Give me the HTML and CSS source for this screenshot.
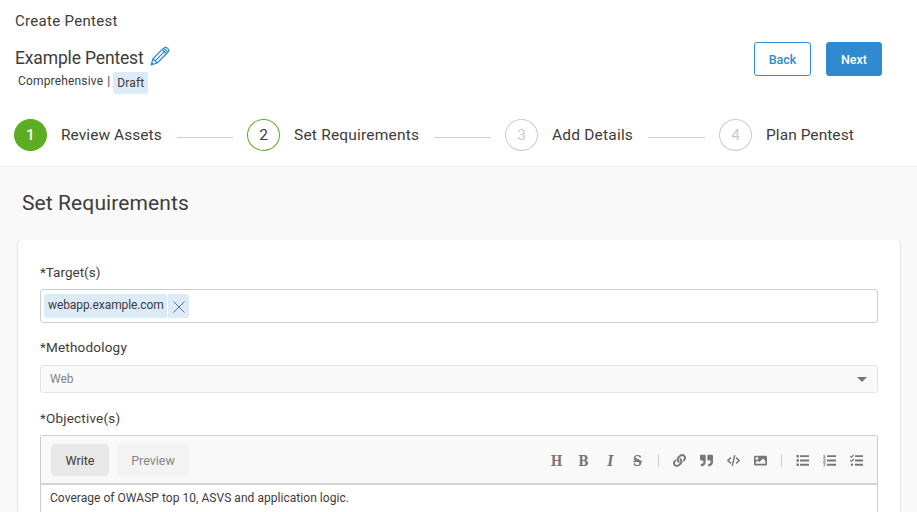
FILE: index.html
```html
<!DOCTYPE html>
<html lang="en">
<head>
<meta charset="utf-8">
<title>Create Pentest</title>
<link rel="stylesheet" href="styles.css">
</head>
<body>
<header class="header">
  <div class="crumb">Create Pentest</div>
  <div class="title-row">
    <div>
      <div class="title"><h1>Example Pentest</h1>
        <svg class="pencil" viewBox="0 0 20 20" fill="none" stroke="#2f8ad0" stroke-width="1.25" stroke-linejoin="round"><path d="M1.2 18.8 3 12.8 13.7 2.1Q15.6.4 17.6 2.4T17.9 6.3L7.2 17zM3 12.8 7.2 17M12.3 3.5l4.2 4.2M13.7 2.1l4.2 4.2M5.1 14.9 14.4 5.6M1.8 16.8l1.4 1.4"/></svg>
      </div>
      <div class="meta"><span>Comprehensive</span><span class="bar">|</span><span class="draft">Draft</span></div>
    </div>
    <div class="actions"><button class="btn back">Back</button><button class="btn next">Next</button></div>
  </div>
  <ol class="steps">
    <li class="step s1"><span class="num done">1</span><span class="name">Review Assets</span><i></i></li>
    <li class="step s2"><span class="num current">2</span><span class="name">Set Requirements</span><i></i></li>
    <li class="step s3"><span class="num">3</span><span class="name">Add Details</span><i></i></li>
    <li class="step s4"><span class="num">4</span><span class="name">Plan Pentest</span></li>
  </ol>
</header>
<main>
  <h2>Set Requirements</h2>
  <section class="card">
    <label class="l-target">*Target(s)</label>
    <div class="targets"><span class="chip">webapp.example.com</span><span class="remove"><svg viewBox="0 0 12 12" stroke="#53626e" stroke-width=".9"><path d="M.5.5l11 11M11.5.5l-11 11"/></svg></span></div>
    <label class="l-method">*Methodology</label>
    <div class="select"><span>Web</span><b></b></div>
    <label class="l-object">*Objective(s)</label>
    <div class="editor">
      <div class="toolbar">
        <span class="tab write">Write</span><span class="tab preview">Preview</span>
        <div class="tools">
          <span class="tool letter">H</span><span class="tool letter">B</span><span class="tool letter it">I</span><span class="tool letter strike">S</span>
          <span class="sep"></span>
          <span class="tool"><svg viewBox="0 0 512 512"><path d="M326.612 185.391c59.747 59.809 58.927 155.698.36 214.59-.11.12-.24.25-.36.37l-67.2 67.2c-59.27 59.27-155.699 59.262-214.96 0-59.27-59.26-59.27-155.7 0-214.96l37.106-37.106c9.84-9.84 26.786-3.3 27.294 10.606.648 17.722 3.826 35.527 9.69 52.721 1.986 5.822.567 12.262-3.783 16.612l-13.087 13.087c-28.026 28.026-28.905 73.66-1.155 101.96 28.024 28.579 74.086 28.749 102.325.51l67.2-67.19c28.191-28.191 28.073-73.757 0-101.83-3.701-3.694-7.429-6.564-10.341-8.569a16.037 16.037 0 0 1-6.947-12.606c-.396-10.567 3.348-21.456 11.698-29.806l21.054-21.055c5.521-5.521 14.182-6.199 20.584-1.731a152.482 152.482 0 0 1 20.522 17.197zM467.547 44.449c-59.261-59.262-155.69-59.27-214.96 0l-67.2 67.2c-.12.12-.25.25-.36.37-58.566 58.892-59.387 154.781.36 214.59a152.454 152.454 0 0 0 20.521 17.196c6.402 4.468 15.064 3.789 20.584-1.731l21.054-21.055c8.35-8.35 12.094-19.239 11.698-29.806a16.037 16.037 0 0 0-6.947-12.606c-2.912-2.005-6.64-4.875-10.341-8.569-28.073-28.073-28.191-73.639 0-101.83l67.2-67.19c28.239-28.239 74.3-28.069 102.325.51 27.75 28.3 26.872 73.934-1.155 101.96l-13.087 13.087c-4.35 4.35-5.769 10.79-3.783 16.612 5.864 17.194 9.042 34.999 9.69 52.721.509 13.906 17.454 20.446 27.294 10.606l37.106-37.106c59.271-59.259 59.271-155.699.001-214.959z"/></svg></span>
          <span class="tool"><svg viewBox="0 0 512 512"><path d="M464 32H336c-26.5 0-48 21.5-48 48v128c0 26.5 21.5 48 48 48h80v64c0 35.3-28.7 64-64 64h-8c-13.3 0-24 10.7-24 24v48c0 13.3 10.7 24 24 24h8c88.4 0 160-71.6 160-160V80c0-26.5-21.5-48-48-48zm-288 0H48C21.5 32 0 53.5 0 80v128c0 26.5 21.5 48 48 48h80v64c0 35.3-28.7 64-64 64h-8c-13.3 0-24 10.7-24 24v48c0 13.3 10.7 24 24 24h8c88.4 0 160-71.6 160-160V80c0-26.5-21.5-48-48-48z"/></svg></span>
          <span class="tool"><svg viewBox="0 0 13 13"><path fill="none" stroke="#777" stroke-width="1.5" d="M3.9 3.6.9 6.5l3 2.9M9.1 3.6l3 2.9-3 2.9M7.7 1.2 5.3 11.8"/></svg></span>
          <span class="tool"><svg viewBox="0 0 512 512"><path d="M464 448H48c-26.51 0-48-21.49-48-48V112c0-26.51 21.49-48 48-48h416c26.51 0 48 21.49 48 48v288c0 26.51-21.49 48-48 48zM112 120c-30.928 0-56 25.072-56 56s25.072 56 56 56 56-25.072 56-56-25.072-56-56-56zM64 384h384V272l-87.515-87.515c-4.686-4.686-12.284-4.686-16.971 0L208 320l-55.515-55.515c-4.686-4.686-12.284-4.686-16.971 0L64 336v48z"/></svg></span>
          <span class="sep"></span>
          <span class="tool"><svg viewBox="0 0 13 13"><path d="M.5 1h2.4v2.4H.5zM.5 5.3h2.4v2.4H.5zM.5 9.6h2.4V12H.5zM4 1.2h9v1.9H4zM4 5.5h9v1.9H4zM4 9.8h9v1.9H4z"/></svg></span>
          <span class="tool"><svg viewBox="0 0 13 13"><path d="M4 1.2h9v1.9H4zM4 5.5h9v1.9H4zM4 9.8h9v1.9H4z"/><path fill="none" stroke="#777" stroke-width=".8" d="M.4 1.2h1v2.4M.2 3.6h2.4M.3 5.2h1.9v1.1L.4 7.8h2.3M.3 9.2h1.9L1.3 10.3q1.1 0 1 .9T.3 12"/></svg></span>
          <span class="tool"><svg viewBox="0 0 13 13"><path d="M5 1.2h8v1.9H5zM5 5.5h8v1.9H5zM5 9.8h8v1.9H5z"/><circle cx="2" cy="10.7" r="1.2"/><path fill="none" stroke="#777" stroke-width="1.2" d="M.3 2.1l1.1 1.1L3.8.8M.3 6.3l1.1 1.1L3.8 5"/></svg></span>
        </div>
      </div>
      <div class="text">Coverage of OWASP top 10, ASVS and application logic.</div>
    </div>
  </section>
</main>
</body>
</html>
```
FILE: styles.css
```css
* { box-sizing: border-box; }
body { margin: 0; background: #f9f9f9; color: #403b3c; font-family: Roboto, "Liberation Sans", sans-serif; }
h1, h2, ol { margin: 0; padding: 0; font-weight: 400; }
.header { height: 167px; background: #fff; border-bottom: 1px solid #f0f0f0; overflow: hidden; }
.crumb { margin: 11px 0 0 15px; height: 20px; line-height: 20px; font-size: 15px; letter-spacing: .3px; }
.title-row { display: flex; justify-content: space-between; height: 71px; margin-top: 11px; padding: 0 35px 0 15px; }
.title { display: flex; height: 30px; padding-top: 4px; }
h1 { width: 135px; white-space: nowrap; font-size: 17.5px; line-height: 24px; letter-spacing: -.15px; }
.pencil { width: 20px; height: 20px; }
.meta { display: flex; padding-left: 3px; font-size: 12px; line-height: 18px; letter-spacing: .17px; }
.bar { margin: 0 3px 0 4px; }
.draft { width: 35px; text-align: center; height: 22px; line-height: 22px; background: #dcebf8; border-radius: 2px; }
.actions { display: flex; gap: 15px; }
.btn { height: 34px; margin: 0; padding: 1px 0 0; font: 500 12.5px Roboto, sans-serif; border: 1px solid #2f8ad0; border-radius: 3px; }
.back { width: 57px; background: #fff; color: #2f8ad0; }
.next { width: 56px; background: #2f8ad0; color: #fff; }
.steps { display: flex; list-style: none; padding: 6px 0 0 14px; }
.step { display: flex; align-items: center; height: 32px; font-size: 15.5px; }
.s1 { width: 233px; }
.s2 { width: 258px; }
.s3 { width: 214px; }
.num { display: flex; align-items: center; justify-content: center; width: 33px; height: 32px; padding-bottom: 1px; flex: none; border: 1px solid #ccc; border-radius: 50%; color: #ccc; }
.done { background: #5cad23; border-color: #5cad23; color: #fff; font-weight: 500; }
.current { border-color: #5cad23; color: #403b3c; }
.name { margin: -1px 0 0 14px; white-space: nowrap; letter-spacing: .05px; }
.s2 .name, .s3 .name { letter-spacing: .2px; }
.step i { height: 1px; margin: 5px 14px 0 15px; background: #ccc; flex: 1; }
main { height: 345px; overflow: hidden; }
h2 { padding: 20px 0 0 22px; height: 73px; font-size: 21px; line-height: 32px; letter-spacing: .1px; }
.card { margin: 0 17px 0 18px; height: 272px; padding: 21px 22px 0; background: #fff; border-radius: 4px 4px 0 0; box-shadow: 0 0 2px #bbb; clip-path: inset(0 -3px 0 -3px); }
label { display: block; height: 22px; line-height: 22px; font-size: 13.5px; letter-spacing: .2px; }
.l-target { letter-spacing: 0; }
.l-method { line-height: 20px; }
.targets { display: flex; height: 34px; margin: 6px 0 14px; padding: 4px 3px; border: 1px solid #ccc; border-radius: 3px; font-size: 12px; }
.chip { width: 123px; white-space: nowrap; height: 24px; line-height: 22px; padding: 0 4px; background: #dcebf8; border-radius: 3px 0 0 3px; letter-spacing: -.1px; }
.remove { width: 21px; height: 24px; margin-left: 1px; padding: 7px 0 0 5px; background: #dcebf8; border-radius: 0 3px 3px 0; }
.remove svg { display: block; width: 12px; height: 12px; }
.select { display: flex; align-items: center; justify-content: space-between; height: 28px; margin: 6px 0 14px; padding: 0 10px 0 9px; border: 1px solid #e3e3e3; border-radius: 3px; background: #f9f9f9; color: #858585; font-size: 12px; }
.select b { border: 5px solid transparent; border-top-color: #777; border-bottom: 0; }
.editor { height: 77px; margin-top: 6px; border: 1px solid #ccc; border-bottom: 0; border-radius: 3px 3px 0 0; }
.toolbar { display: flex; align-items: center; height: 49px; padding: 0 7px 0 10px; background: #f9f9f9; border-bottom: 2px solid #d4d4d4; }
.tab { height: 32px; line-height: 33px; border-radius: 4px; text-align: center; font-size: 12.5px; }
.write { width: 58px; background: #e8e8e8; }
.preview { width: 72px; margin-left: 8px; background: #f3f3f3; color: #858585; }
.tools { display: flex; align-items: center; margin-left: auto; padding-top: 2px; }
.tool { display: flex; align-items: center; justify-content: center; width: 27px; height: 27px; color: #777; fill: #777; }
.tool svg { width: 13px; height: 13px; }
.letter { font: bold 14px "DejaVu Serif", serif; transform: scaleX(.88); }
.it { font-style: italic; }
.strike { text-decoration: line-through; }
.sep { width: 1px; height: 13px; margin: 0 7px; background: #ccc; }
.text { padding: 4px 9px; font-size: 12px; line-height: 18px; letter-spacing: .04px; }
```
